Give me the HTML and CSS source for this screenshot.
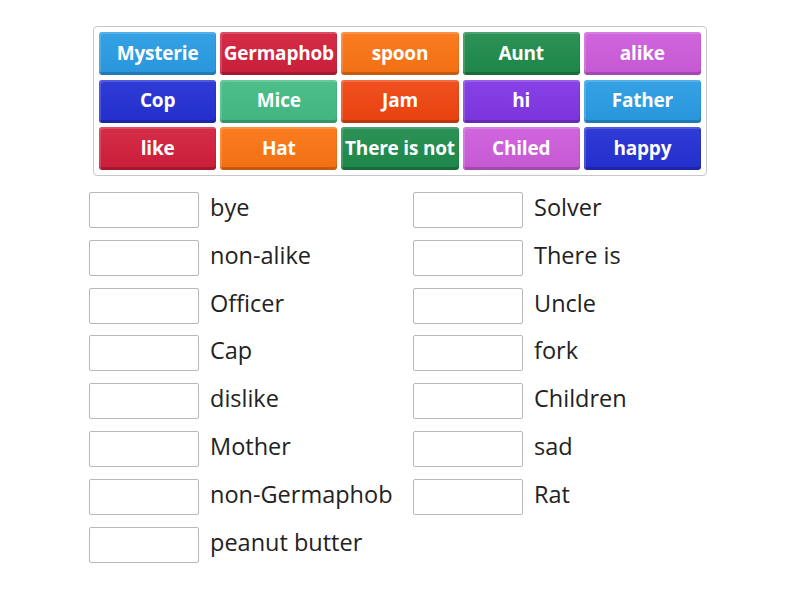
FILE: index.html
```html
<!DOCTYPE html>
<html>
<head>
<meta charset="utf-8">
<link rel="stylesheet" href="styles.css">
</head>
<body>
<div class="page">
  <div class="bank">
    <div class="tile c-blue">Mysterie</div>
    <div class="tile c-red">Germaphob</div>
    <div class="tile c-orange">spoon</div>
    <div class="tile c-green">Aunt</div>
    <div class="tile c-pink">alike</div>
    <div class="tile c-navy">Cop</div>
    <div class="tile c-mint">Mice</div>
    <div class="tile c-vermil">Jam</div>
    <div class="tile c-purple">hi</div>
    <div class="tile c-blue">Father</div>
    <div class="tile c-red">like</div>
    <div class="tile c-orange">Hat</div>
    <div class="tile c-green">There is not</div>
    <div class="tile c-pink">Chiled</div>
    <div class="tile c-navy">happy</div>
  </div>
  <div class="answers">
    <div class="col">
      <div class="row"><div class="slot"></div><span class="label">bye</span></div>
      <div class="row"><div class="slot"></div><span class="label">non-alike</span></div>
      <div class="row"><div class="slot"></div><span class="label">Officer</span></div>
      <div class="row"><div class="slot"></div><span class="label">Cap</span></div>
      <div class="row"><div class="slot"></div><span class="label">dislike</span></div>
      <div class="row"><div class="slot"></div><span class="label">Mother</span></div>
      <div class="row"><div class="slot"></div><span class="label">non-Germaphob</span></div>
      <div class="row"><div class="slot"></div><span class="label">peanut butter</span></div>
    </div>
    <div class="col">
      <div class="row"><div class="slot"></div><span class="label">Solver</span></div>
      <div class="row"><div class="slot"></div><span class="label">There is</span></div>
      <div class="row"><div class="slot"></div><span class="label">Uncle</span></div>
      <div class="row"><div class="slot"></div><span class="label">fork</span></div>
      <div class="row"><div class="slot"></div><span class="label">Children</span></div>
      <div class="row"><div class="slot"></div><span class="label">sad</span></div>
      <div class="row"><div class="slot"></div><span class="label">Rat</span></div>
    </div>
  </div>
</div>
</body>
</html>
```
FILE: styles.css
```css
html, body {
  margin: 0;
  padding: 0;
  background: #ffffff;
}
body {
  font-family: "Open Sans", "Noto Sans", sans-serif;
  color: #222222;
}
.page {
  padding: 26px 0 0 0;
}
.bank {
  margin-left: 93px;
  width: 602px;
  padding: 5px 5px 5px 5px;
  border: 1px solid #c8c8c8;
  border-radius: 4px;
  display: grid;
  grid-template-columns: repeat(5, 117.2px);
  grid-auto-rows: 43px;
  column-gap: 4px;
  row-gap: 4.5px;
}
.tile {
  display: flex;
  align-items: center;
  justify-content: center;
  box-sizing: border-box;
  border-radius: 3px;
  color: #ffffff;
  font-weight: 700;
  font-size: 19px;
  white-space: nowrap;
  overflow: hidden;
  padding-bottom: 2px;
  box-shadow:
    inset 2px 2px 0 rgba(255,255,255,0.16),
    inset -1px 0 0 rgba(0,0,0,0.05),
    inset 0 -3px 0 rgba(0,0,0,0.18);
  background-image: linear-gradient(rgba(255,255,255,0.06), rgba(0,0,0,0.04));
  letter-spacing: -0.2px;
}
.c-blue   { background-color: #2a9ce4; }
.c-red    { background-color: #d21f3c; }
.c-orange { background-color: #fb7413; }
.c-green  { background-color: #1f8b4b; }
.c-pink   { background-color: #cd5cdb; }
.c-navy   { background-color: #2430d4; }
.c-mint   { background-color: #43bb84; }
.c-vermil { background-color: #f04511; }
.c-purple { background-color: #8036e4; }

.answers {
  margin-top: 16px;
  display: grid;
  grid-template-columns: 324px 300px;
  margin-left: 89px;
}
.col {
  display: flex;
  flex-direction: column;
  gap: 11.8px;
}
.row {
  display: flex;
  align-items: center;
  height: 36px;
}
.slot {
  width: 110px;
  height: 36px;
  box-sizing: border-box;
  border: 1px solid #b8b8b8;
  border-radius: 2px;
  background: #ffffff;
  flex: none;
}
.label {
  margin-left: 11px;
  font-size: 23.5px;
  color: #222222;
  white-space: nowrap;
  position: relative;
  top: -3px;
}
```
